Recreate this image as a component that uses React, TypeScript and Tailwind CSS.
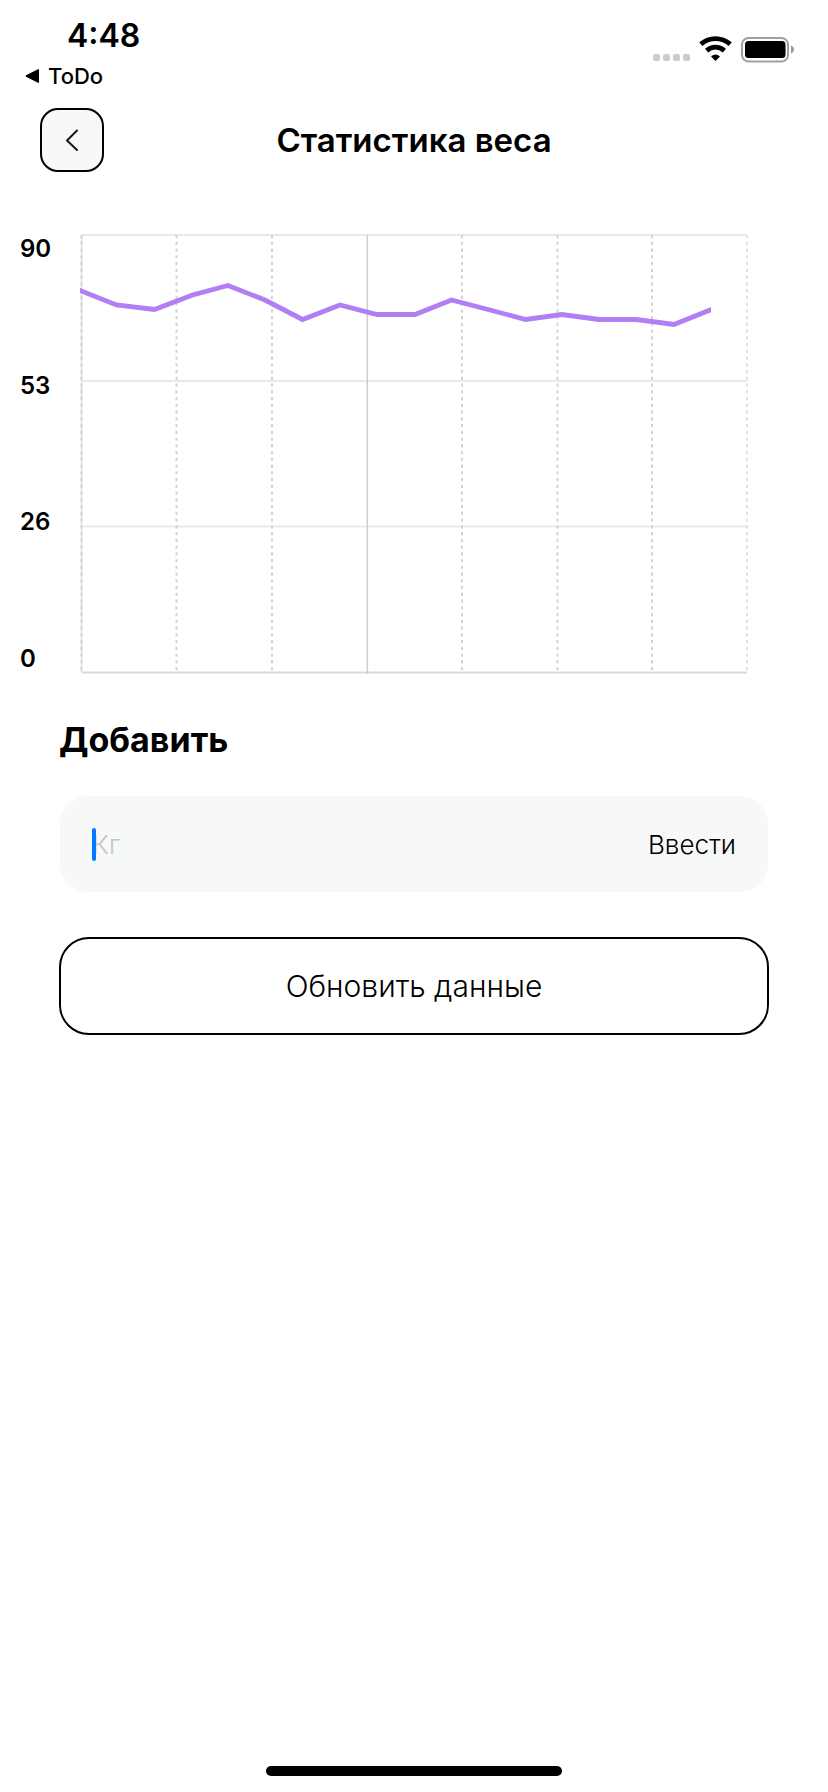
import { useState } from "react";

const axisLabels = [90, 53, 26, 0];

const dashedColumns = [1.5, 96.5, 192, 382, 477.5, 572, 667];

const weightPoints: [number, number][] = [
  [-4, 55], [0, 56.5], [36.5, 71], [74.5, 75.5], [112.5, 61], [148, 51.5],
  [185, 66], [222.5, 85.5], [260, 71], [297, 80.5], [335, 80.5], [371.5, 66],
  [408, 75.5], [445.5, 85.5], [482, 80.5], [519, 85.5], [556.5, 85.5],
  [594, 90.5], [635, 74],
];

function StatusBar() {
  return (
    <header className="flex items-start justify-between pr-8">
      <div className="pt-4">
        <p className="pl-[67px] text-[32px] leading-10 font-semibold">4:48</p>
        <a href="#todo" className="flex items-center gap-2 pl-[25px] text-[22px] leading-10 font-medium">
          <svg width="15" height="14" viewBox="0 0 15 14" aria-hidden="true">
            <path d="M14 0.5V13.5Q14 14 13 13.7L1 7.7Q0.2 7 1 6.3L13 0.3Q14 0 14 0.5Z" />
          </svg>
          ToDo
        </a>
      </div>
      <svg className="mt-9" width="144" height="28" viewBox="0 0 144 28" aria-hidden="true">
        <g fill="#cccccc">
          <rect x="1" y="18" width="7" height="7" rx="2" />
          <rect x="11" y="18" width="7" height="7" rx="2" />
          <rect x="21" y="18" width="7" height="7" rx="2" />
          <rect x="31" y="18" width="7" height="7" rx="2" />
        </g>
        <g fill="none" stroke="#000">
          <path d="M48.8 8.200C57.500 0.800 69.500 0.800 78.200 8.200" strokeWidth="4.800" />
          <path d="M54.600 14.600C60 10 67 10 72.400 14.600" strokeWidth="4.800" />
        </g>
        <path d="M63.500 25L59 20.500Q63.500 16.500 68 20.500Z" />
        <rect x="90" y="2" width="46" height="23.500" rx="6.500" fill="none" stroke="#a0a0a0" strokeWidth="2" />
        <rect x="93" y="5" width="40.500" height="17" rx="3.500" />
        <path d="M139 9.500C143 11 143 16 139 17.500Z" fill="#999" />
      </svg>
    </header>
  );
}

function WeightChart() {
  return (
    <section aria-label="График веса" className="mt-[62px] flex pr-[79px] pl-5">
      <div className="flex w-[60px] shrink-0 flex-col justify-between text-2xl leading-[30px] font-semibold">
        {axisLabels.map((label) => (
          <span key={label}>{label}</span>
        ))}
      </div>
      <svg className="min-w-0 flex-1" viewBox="0 0 669 440" aria-hidden="true">
        <g stroke="#e9e9e9" strokeWidth="2">
          <path d="M2 1H667M2 147H667M2 292.500H667" />
          <path d="M2 438.500H667" stroke="#dadada" />
        </g>
        <path d="M1.500 1V438" stroke="#dedede" strokeWidth="1.500" />
        <path d="M287.300 1V440" stroke="#d0d0d0" strokeWidth="1.600" />
        {dashedColumns.map((x) => (
          <path
            key={x}
            d={`M${x} 1V440`}
            stroke={x > 660 ? "#e2e2e2" : "#d3d3d3"}
            strokeWidth="2"
            strokeDasharray="3.200 3.550"
          />
        ))}
        <clipPath id="plot">
          <rect x="0" y="0" width="631" height="440" />
        </clipPath>
        <polyline
          clipPath="url(#plot)"
          points={weightPoints.map((point) => point.join(",")).join(" ")}
          fill="none"
          stroke="#b17ef6"
          strokeWidth="4.800"
        />
      </svg>
    </section>
  );
}

export default function App() {
  const [weight, setWeight] = useState("");

  return (
    <div className="flex min-h-screen flex-col bg-white font-['Inter',sans-serif] text-black">
      <StatusBar />

      <div className="mt-3 grid grid-cols-[64px_1fr_64px] items-center px-10">
        <button
          type="button"
          aria-label="Назад"
          className="flex size-16 items-center justify-center rounded-[18px] border-2 border-black bg-[#f7f8f8]"
        >
          <svg width="14" height="22" viewBox="0 0 14 22" fill="none" aria-hidden="true">
            <path d="M12 1.500L2 11.500L12 21" stroke="#1d1617" strokeWidth="2" strokeLinecap="round" strokeLinejoin="round" />
          </svg>
        </button>
        <h1 className="text-center text-[33px] leading-10 font-semibold">Статистика веса</h1>
      </div>

      <WeightChart />

      <form className="mt-11 px-[59px]" onSubmit={(event) => event.preventDefault()}>
        <label htmlFor="weight" className="block text-[34px] leading-11 font-bold">
          Добавить
        </label>
        <div className="relative mx-px mt-[34px] flex h-24 items-center rounded-[28px] bg-[#f7f8f8] px-8">
          <input
            id="weight"
            value={weight}
            onChange={(event) => setWeight(event.target.value)}
            placeholder="Кг"
            inputMode="decimal"
            className="min-w-0 flex-1 bg-transparent text-[26px] font-light caret-[#007aff] outline-none placeholder:text-[#c4c5c5]"
          />
          <span className="absolute top-8 left-8 h-[33px] w-1 rounded-full bg-[#007aff]" />
          <button type="submit" className="text-[26px] font-light">
            Ввести
          </button>
        </div>
        <button
          type="button"
          className="mt-[45px] h-[98px] w-full rounded-[30px] border-2 border-black text-[30px] font-light"
        >
          Обновить данные
        </button>
      </form>

      <div className="mx-auto mt-auto mb-4 h-[10px] w-[296px] rounded-full bg-black" />
    </div>
  );
}
